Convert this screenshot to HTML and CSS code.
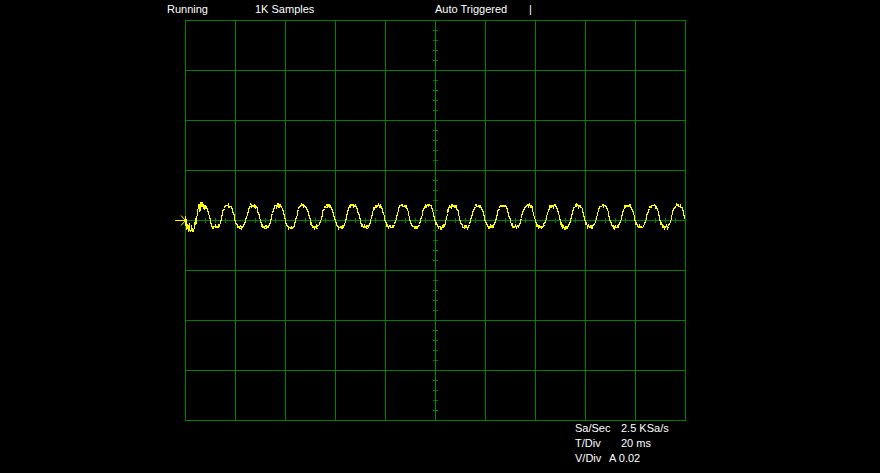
FILE: index.html
```html
<!DOCTYPE html>
<html>
<head>
<meta charset="utf-8">
<link rel="stylesheet" href="styles.css">
</head>
<body>
<div class="screen">
  <div class="status">
    <span class="st st-run">Running</span>
    <span class="st st-samples">1K Samples</span>
    <span class="st st-trig">Auto Triggered</span>
    <span class="st">|</span>
  </div>
  <svg class="scope" width="516" height="401" viewBox="170 20 516 401" shape-rendering="crispEdges">
    <g class="grid" id="grid"></g>
    <g class="marker">
      <line x1="175" y1="220.5" x2="185" y2="220.5"/>
      <polyline points="181,215.5 185.5,220.5 181,225.5" shape-rendering="auto"/>
    </g>
    <polyline class="trace" id="trace" points=""/>
  </svg>
  <div class="readout">
    <div class="row"><span class="lbl">Sa/Sec</span><span>2.5 KSa/s</span></div>
    <div class="row"><span class="lbl">T/Div</span><span>20 ms</span></div>
    <div class="row"><span class="lbl lbl-short">V/Div</span><span>A 0.02</span></div>
  </div>
</div>
<script src="script.js"></script>
</body>
</html>
```
FILE: styles.css
```css
html, body {
  margin: 0;
  padding: 0;
  background: #000;
}
.screen {
  width: 880px;
  height: 473px;
  background: #000;
  color: #fff;
  font-family: "Liberation Sans", Arial, sans-serif;
  font-size: 11px;
  overflow: hidden;
}
.status {
  height: 20px;
  line-height: 18px;
  display: flex;
  padding-left: 167px;
  white-space: nowrap;
}
.st-run { width: 88px; }
.st-samples { width: 180px; }
.st-trig { width: 94px; }
.scope {
  display: block;
  margin-left: 170px;
}
.grid line {
  stroke: #008000;
  stroke-width: 1;
}
.marker line, .marker polyline {
  stroke: #ffff00;
  stroke-width: 1;
  fill: none;
}
.trace {
  fill: none;
  stroke: #ffff00;
  stroke-width: 1;
}
.readout {
  padding-left: 575px;
  line-height: 15px;
}
.row {
  display: flex;
  white-space: nowrap;
}
.lbl { width: 46px; }
.lbl-short { width: 34px; }
```
FILE: script.js
```js
(function () {
  var NS = "http://www.w3.org/2000/svg";
  var grid = document.getElementById("grid");
  function line(x1, y1, x2, y2) {
    var l = document.createElementNS(NS, "line");
    l.setAttribute("x1", x1); l.setAttribute("y1", y1);
    l.setAttribute("x2", x2); l.setAttribute("y2", y2);
    grid.appendChild(l);
  }
  for (var i = 0; i <= 10; i++) {
    var x = 185 + i * 50 + 0.5;
    line(x, 20, x, 421);
  }
  for (var j = 0; j <= 8; j++) {
    var y = 20 + j * 50 + 0.5;
    line(185, y, 686, y);
  }
  for (var ty = 30; ty < 420; ty += 10) {
    line(433, ty + 0.5, 438, ty + 0.5);
  }
  for (var tx = 195; tx < 685; tx += 10) {
    line(tx + 0.5, 218, tx + 0.5, 223);
  }

  var seed = 12345;
  function rnd() { seed = (seed * 16807) % 2147483647; return seed / 2147483647; }
  var pts = [];
  for (var k = 0; k <= 1000; k++) {
    var px = 185 + k * 0.5;
    var ph = 2 * Math.PI * (px - 203) / 25;
    var v = Math.cos(ph) - 0.12 * Math.cos(3 * ph);
    var yy = 216 - 12 * v;
    var amp = px < 205 ? 5 : 1.3;
    yy += (rnd() - 0.5) * 2 * amp;
    if (rnd() < 0.02) yy += (rnd() - 0.5) * 6;
    pts.push(px + "," + (Math.round(yy) + 0.5));
  }
  document.getElementById("trace").setAttribute("points", pts.join(" "));
})();
```
